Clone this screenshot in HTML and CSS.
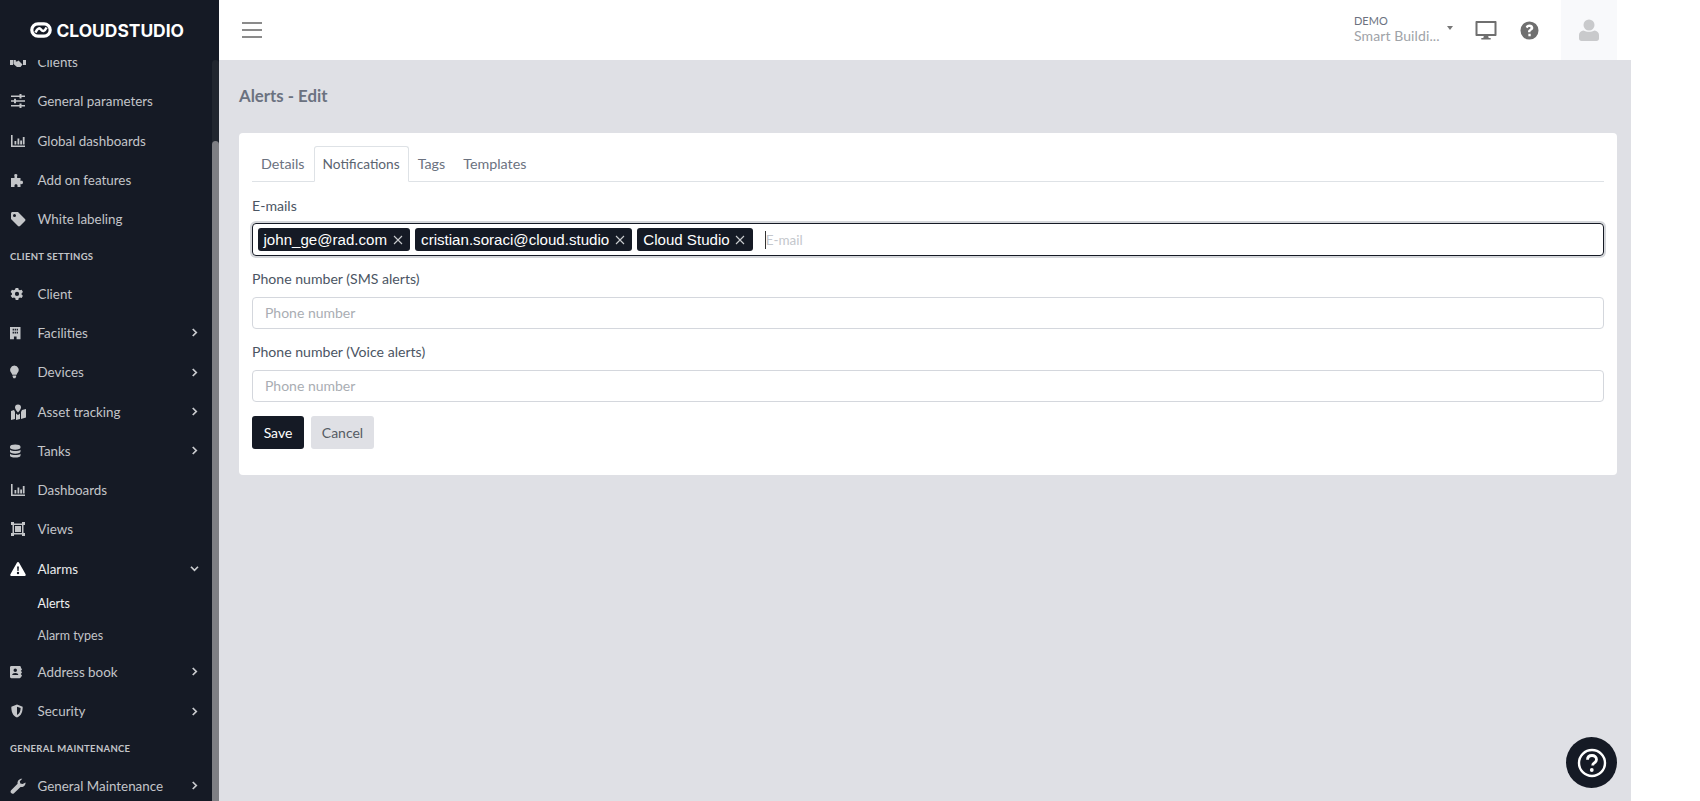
FILE: index.html
```html
<!DOCTYPE html>
<html lang="en">
<head>
<meta charset="utf-8">
<title>Alerts - Edit</title>
<link rel="stylesheet" href="styles.css">
</head>
<body>
<div class="app">
  <aside class="sidebar">
    <div class="brand">
      <svg class="brand-icon" viewBox="0 0 22 16"><rect x="1.800" y="1.800" width="18.400" height="12.400" rx="6.200" fill="none" stroke="#fff" stroke-width="3.200"/><path d="M5.500 10.500C7.500 6 9.500 5.500 11 7.500s3.500 2.500 5.500-2" fill="none" stroke="#fff" stroke-width="2.600"/></svg>
      <span class="brand-text">CLOUDSTUDIO</span>
    </div>
    <div class="side-scroll">
      <nav class="menu">
        <a class="item"><svg class="ic ic-l" viewBox="0 0 16 16"><path d="M0 4h3v7H0zM13 4h3v7h-3zM3.500 4.500H7L5.500 7c1 1 2 .5 3-.5l4 4-2 2.500H7L3.500 10z"/></svg><span>Clients</span></a>
        <a class="item"><svg class="ic ic-l" viewBox="0 0 16 16"><path d="M1 2.500h14v1.500H1zM1 7.200h14v1.500H1zM1 12h14v1.500H1zM9.500 1h2v4.500h-2zM4 5.700h2v4.500H4zM9.500 10.500h2V15h-2z"/></svg><span>General parameters</span></a>
        <a class="item"><svg class="ic ic-l" viewBox="0 0 16 16"><path d="M1 2h1.600v10.500H15V14H1zM4.500 8h1.800v3.500H4.500zM7.500 5.500h1.800v6H7.500zM10.200 7.500H12v4h-1.800zM12.800 4h1.800v7.500h-1.800z"/></svg><span>Global dashboards</span></a>
        <a class="item"><svg class="ic ic-l" viewBox="0 0 16 16"><path d="M1 6h3.500V4.200C4 3.500 4 2 5.800 2s1.800 1.500 1.300 2.200V6H10.500v3.200c.8-.6 2.500-.6 2.500 1.300s-1.700 1.900-2.500 1.300V15H7.500v-1.500c0-1.700-3-1.700-3 0V15H1z"/></svg><span>Add on features</span></a>
        <a class="item"><svg class="ic ic-l" viewBox="0 0 16 16"><path d="M1 2.500C1 1.700 1.700 1 2.500 1H8l7 7c.6.600.6 1.500 0 2l-5 5c-.6.600-1.500.6-2 0L1 8zM4.500 3A1.500 1.500 0 1 0 4.500 6 1.500 1.500 0 0 0 4.500 3z" fill-rule="evenodd"/></svg><span>White labeling</span></a>
        <div class="section">Client settings</div>
        <a class="item"><svg class="ic" viewBox="0 0 16 16"><path d="M6.500 1h3l.4 2 1.500.8 1.900-.7 1.500 2.600-1.500 1.300v1.800l1.500 1.300-1.500 2.600-1.900-.7-1.500.8-.4 2h-3l-.4-2-1.500-.8-1.900.7L.7 10.100l1.500-1.300V7L.7 5.700l1.500-2.600 1.900.7 1.500-.8zM8 5.500a2.400 2.400 0 1 0 0 4.800 2.400 2.400 0 0 0 0-4.800z" fill-rule="evenodd"/></svg><span>Client</span></a>
        <a class="item has-sub"><svg class="ic" viewBox="2 0 16 16"><path d="M2 1h12v14H9.500v-3h-3v3H2zM5 3v2h1.500V3zM7.300 3v2h1.500V3zM9.600 3v2h1.500V3zM5 6.500v2h1.500v-2zM7.300 6.500v2h1.500v-2zM9.600 6.500v2h1.500v-2z" fill-rule="evenodd"/></svg><span>Facilities</span><svg class="chev" viewBox="0 0 8 10"><path d="M2 1l4 4-4 4"/></svg></a>
        <a class="item has-sub"><svg class="ic" viewBox="1.500 0 16 16"><path d="M6.500 0.500a5 5 0 0 1 3.500 8.500c-.6.700-.8 1.400-.9 2H4c-.1-.6-.3-1.300-.9-2A5 5 0 0 1 6.500.5zM4.500 12h4v1.500L7.500 15h-2l-1-1.500z"/></svg><span>Devices</span><svg class="chev" viewBox="0 0 8 10"><path d="M2 1l4 4-4 4"/></svg></a>
        <a class="item has-sub"><svg class="ic ic-l" viewBox="0 0 16 16"><path d="M8 .5a3 3 0 0 1 3 3C11 5 9 7.500 8 8.500 7 7.500 5 5 5 3.500a3 3 0 0 1 3-3zM1 7l3-1 1 2v7l-4 1zM6 9.500 8 11l2-1.500V15l-4 1zM11 8l1-2 4-1v8.500L11 15z"/></svg><span>Asset tracking</span><svg class="chev" viewBox="0 0 8 10"><path d="M2 1l4 4-4 4"/></svg></a>
        <a class="item has-sub"><svg class="ic" viewBox="2 0 16 16"><path d="M2 3c0-1.500 2.500-2.500 6-2.500S14 1.500 14 3v1c0 1.500-2.500 2.500-6 2.500S2 5.500 2 4zM2 6.500C3.500 7.700 5.500 8 8 8s4.500-.3 6-1.500V8.500C14 10 11.500 11 8 11S2 10 2 8.500zM2 11c1.500 1.200 3.500 1.500 6 1.500s4.500-.3 6-1.500v2c0 1.500-2.500 2.500-6 2.500S2 14.500 2 13z"/></svg><span>Tanks</span><svg class="chev" viewBox="0 0 8 10"><path d="M2 1l4 4-4 4"/></svg></a>
        <a class="item"><svg class="ic ic-l" viewBox="0 0 16 16"><path d="M1 2h1.600v10.500H15V14H1zM4.500 8h1.800v3.500H4.500zM7.500 5.500h1.800v6H7.500zM10.200 7.500H12v4h-1.800zM12.800 4h1.800v7.500h-1.800z"/></svg><span>Dashboards</span></a>
        <a class="item"><svg class="ic ic-l" viewBox="0 0 16 16"><path d="M1 1h3v1.500h8V1h3v3h-1.500v8H15v3h-3v-1.500H4V15H1v-3h1.500V4H1zM4 4v8h8V4z" fill-rule="evenodd"/><path d="M5 5h6v6H5z"/></svg><span>Views</span></a>
        <a class="item open"><svg class="ic ic-l ic-white" viewBox="0 0 16 16"><path d="M8 1c.5 0 .9.300 1.100.7l6.500 11.500c.4.800-.1 1.800-1.100 1.800h-13c-1 0-1.500-1-1.100-1.800L6.900 1.700C7.100 1.300 7.500 1 8 1zM7.100 5.500l.3 4.500h1.200l.3-4.500zM8 10.800a1.200 1.200 0 1 0 0 2.400 1.200 1.200 0 0 0 0-2.400z" fill-rule="evenodd"/></svg><span>Alarms</span><svg class="chev" viewBox="0 0 10 8"><path d="M1 2l4 4 4-4"/></svg></a>
        <a class="subitem active">Alerts</a>
        <a class="subitem">Alarm types</a>
        <a class="item has-sub"><svg class="ic" viewBox="1.500 0 16 16"><path d="M3 1h9.500c.8 0 1.500.7 1.500 1.500V4h1v2h-1v1.500h1v2h-1V11h1v2h-1v.5c0 .8-.7 1.500-1.500 1.500H3c-.8 0-1.500-.7-1.500-1.500v-11C1.500 1.700 2.200 1 3 1zM7.500 4a2 2 0 1 0 0 4 2 2 0 0 0 0-4zM4 11.500h7c0-1.500-1.500-2.500-3.500-2.500S4 10 4 11.500z" fill-rule="evenodd"/></svg><span>Address book</span><svg class="chev" viewBox="0 0 8 10"><path d="M2 1l4 4-4 4"/></svg></a>
        <a class="item has-sub"><svg class="ic" viewBox="0 0 16 16"><path d="M8 .5l6.500 2.500c0 6-1.500 10-6.500 12.500C3 13 1.500 9 1.500 3zM8 3v9.700c3-1.800 4-4.500 4.200-8.200z" fill-rule="evenodd"/></svg><span>Security</span><svg class="chev" viewBox="0 0 8 10"><path d="M2 1l4 4-4 4"/></svg></a>
        <div class="section">General maintenance</div>
        <a class="item has-sub"><svg class="ic ic-l" viewBox="0 0 16 16"><path d="M15.500 4.500c.3 2.800-2.200 5-5 4.400L4 15.200c-.8.700-2 .7-2.800-.1s-.9-2-.1-2.800l6.500-6.500C7 3 9.500.4 12.300.8L9.800 3.300l.5 2.200 2.300.5z"/></svg><span>General Maintenance</span><svg class="chev" viewBox="0 0 8 10"><path d="M2 1l4 4-4 4"/></svg></a>
      </nav>
      <div class="scrollbar"><div class="thumb"></div></div>
    </div>
  </aside>
  <div class="main">
    <header class="topbar">
      <button class="burger" aria-label="Menu"><i></i><i></i><i></i></button>
      <div class="top-right">
        <div class="tenant">
          <div class="tenant-name">DEMO</div>
          <div class="tenant-site">Smart Buildi...</div>
        </div>
        <span class="caret"></span>
        <svg class="top-ic monitor" viewBox="0 0 22 20"><path d="M1.500 1h19c.6 0 1 .4 1 1v13c0 .6-.4 1-1 1h-19c-.6 0-1-.4-1-1V2c0-.6.400-1 1-1zM2.500 3v11h17V3zM8.800 16h4.400l.5 2h2v1.600H6.300V18h2z" fill-rule="evenodd"/></svg>
        <svg class="top-ic help" viewBox="0 0 20 20"><path d="M10 .5a9.500 9.500 0 1 1 0 19 9.500 9.500 0 0 1 0-19zM8.800 13.500v2.600h2.500v-2.600zM10 3.800c-2.300 0-3.500 1.200-4 2.500l2 1.200c.4-.9.900-1.300 1.800-1.300.8 0 1.400.4 1.400 1 0 .6-.4.900-1.200 1.400-1 .6-1.500 1.200-1.500 2.300v.9h2.500v-.5c0-.5.300-.7 1.100-1.200 1.100-.7 1.900-1.500 1.900-2.900 0-2.100-1.900-3.400-4-3.400z" fill-rule="evenodd"/></svg>
        <div class="user-cell">
          <svg class="user-ic" viewBox="0 0 20 22"><circle cx="10" cy="6" r="5.500"/><path d="M4.500 11.500c1.500 1 3.500 1.300 5.500 1.300s4-.3 5.500-1.300c2.500.3 4.500 2 4.500 4.500v3.500c0 1.300-1 2.500-2.500 2.500h-15C1 22 0 20.800 0 19.500V16c0-2.500 2-4.200 4.500-4.500z"/></svg>
        </div>
      </div>
    </header>
    <main class="content">
      <h1 class="page-title">Alerts - Edit</h1>
      <section class="card">
        <ul class="tabs">
          <li class="tab">Details</li>
          <li class="tab active">Notifications</li>
          <li class="tab">Tags</li>
          <li class="tab">Templates</li>
        </ul>
        <form class="form">
          <label class="label label-first">E-mails</label>
          <div class="tag-input">
            <span class="tag">john_ge@rad.com<svg class="x" viewBox="0 0 10 10"><path d="M1 1l8 8M9 1l-8 8"/></svg></span>
            <span class="tag">cristian.soraci@cloud.studio<svg class="x" viewBox="0 0 10 10"><path d="M1 1l8 8M9 1l-8 8"/></svg></span>
            <span class="tag">Cloud Studio<svg class="x" viewBox="0 0 10 10"><path d="M1 1l8 8M9 1l-8 8"/></svg></span>
            <span class="tag-ph">E-mail</span>
          </div>
          <label class="label">Phone number (SMS alerts)</label>
          <input class="field" placeholder="Phone number">
          <label class="label">Phone number (Voice alerts)</label>
          <input class="field" placeholder="Phone number">
          <div class="actions">
            <button type="button" class="btn btn-save">Save</button>
            <button type="button" class="btn btn-cancel">Cancel</button>
          </div>
        </form>
      </section>
      <button class="fab" aria-label="Help">
        <svg viewBox="0 0 30 30"><circle cx="15" cy="15" r="13" fill="none" stroke="#fff" stroke-width="2.400"/><path d="M10.500 11.800c0-2.800 2-4.300 4.500-4.300s4.500 1.500 4.500 4c0 2-1.300 2.900-2.500 3.700-1 .7-1.300 1.200-1.300 2.300" fill="none" stroke="#fff" stroke-width="2.800"/><circle cx="14.800" cy="22" r="1.900" fill="#fff"/></svg>
      </button>
    </main>
  </div>
</div>
</body>
</html>
```
FILE: styles.css
```css
* { box-sizing: border-box; }
html, body { margin: 0; height: 100%; background: #fff; overflow: hidden; }
body { font-family: "Lato", "Noto Sans", sans-serif; color: #4b5563; }
.app { display: flex; width: 1631px; height: 801px; }

.sidebar { width: 219px; flex: none; background: #151a25; display: flex; flex-direction: column; height: 100%; }
.brand { height: 60px; flex: none; display: flex; align-items: center; gap: 4.500px; padding: 0 0 0 30px; position: relative; z-index: 1; background: #151a25; }
.brand-icon { width: 22px; height: 16px; }
.brand-text { font-family: "Inter", "Liberation Sans", sans-serif; font-weight: 700; font-size: 17.400px; color: #fff; }
.side-scroll { flex: 1; position: relative; overflow: hidden; }
.menu { margin-top: -17.500px; }
.item { display: flex; align-items: center; height: 39.300px; padding-left: 10px; font-size: 13.400px; color: #c3c5c9; position: relative; }
.item span { margin-left: 13.500px; }
.ic { width: 14px; height: 14px; fill: #c4c6c9; flex: none; }
.ic-l { width: 16px; height: 16px; }
.ic-l + span { margin-left: 11.500px; }
.ic-white { fill: #fff; }
.chev { position: absolute; left: 191px; top: 15px; width: 7px; height: 9px; fill: none; stroke: #c9cbce; stroke-width: 2; }
.open { color: #e9eaec; }
.open .chev { width: 9px; height: 7px; top: 16px; left: 189.500px; }
.section { font-size: 9.500px; font-weight: 700; text-transform: uppercase; color: #c3c5c9; letter-spacing: .3px; padding-left: 10px; height: 35px; line-height: 35px; }
.subitem { display: block; height: 32px; line-height: 32px; padding-left: 37.500px; font-size: 12.500px; color: #c3c5c9; }
.subitem.active { color: #f0f1f2; }
.scrollbar { position: absolute; right: 0; top: 0; bottom: 0; width: 7px; background: #21262f; border-radius: 4px 4px 0 0; }
.thumb { position: absolute; top: 81px; bottom: 0; left: 0; right: 0; background: #7e7f84; border-radius: 4px 4px 0 0; }

.main { flex: 1; display: flex; flex-direction: column; min-width: 0; }
.topbar { height: 60px; flex: none; background: #fff; display: flex; align-items: center; justify-content: space-between; padding-left: 23px; padding-right: 14px; }
.burger { border: 0; background: none; padding: 0; width: 20px; display: flex; flex-direction: column; gap: 5px; }
.burger i { display: block; height: 2px; background: #8b8b8b; }
.top-right { display: flex; align-items: center; height: 60px; }
.tenant { width: 93px; line-height: 1; padding-bottom: 3px; }
.tenant-name { font-size: 11px; color: #6b7280; margin-bottom: 3px; }
.tenant-site { font-size: 14px; color: #a0a3a8; letter-spacing: .1px; }
.caret { width: 0; height: 0; border: 3.500px solid transparent; border-top: 4px solid #777; border-bottom: 0; margin-right: 22px; margin-top: -4px; }
.top-ic { fill: #6f6f6f; flex: none; }
.monitor { width: 22px; height: 20px; margin-right: 23px; }
.help { width: 19px; height: 19px; margin-right: 22px; }
.user-cell { width: 56px; height: 60px; background: #f8f9fb; display: flex; align-items: center; justify-content: center; }
.user-ic { width: 20px; height: 22px; fill: #c9cacc; }

.content { flex: 1; background: #dfe0e5; padding: 0 14px 0 20px; position: relative; }
.page-title { margin: 0; padding-top: 26px; height: 73px; font-size: 16.800px; line-height: 20px; font-weight: 700; color: #6b7280; }
.card { background: #fff; border-radius: 4px; height: 342px; padding: 13px 13px 0; }
.tabs { list-style: none; margin: 0; padding: 0; display: flex; height: 36px; border-bottom: 1px solid #dee2e6; }
.tab { padding: 0 8px; height: 36px; line-height: 33px; font-size: 14.300px; color: #6b7280; border: 1px solid transparent; }
.tab.active { background: #fff; color: #5b6470; font-size: 13.700px; border-color: #dee2e6 #dee2e6 #fff; border-radius: 3px 3px 0 0; }
.form { display: flex; flex-direction: column; }
.label { font-size: 14.100px; line-height: 20px; color: #4b5563; margin-bottom: 8px; margin-top: 13px; }
.label-first { margin-top: 14px; margin-bottom: 7px; }
.tag-input { height: 33px; border: 1.500px solid #151a25; border-radius: 4px; box-shadow: 0 0 0 2px #d5d7db; display: flex; align-items: center; padding-left: 4.500px; gap: 5px; }
.tag { display: inline-flex; align-items: center; height: 23px; padding: 0 7.500px 0 6px; background: #151a25; color: #fff; border-radius: 3px; font-family: "Liberation Sans", Arial, sans-serif; font-size: 15.100px; white-space: nowrap; }
.x { width: 10px; height: 10px; margin-left: 5.500px; stroke: #c9cbce; stroke-width: 1.100; fill: none; }
.tag-ph { margin-left: 7px; border-left: 1px solid #333; font-size: 13.500px; color: #c4c7cc; line-height: 18px; }
.field { height: 32px; border: 1px solid #d4d7dd; border-radius: 4px; padding: 0 12px 2px; font: 14px "Lato", "Noto Sans", sans-serif; background: #fff; outline: none; }
.field::placeholder { color: #a9adb3; opacity: 1; }
.actions { display: flex; gap: 7px; margin-top: 14px; }
.btn { height: 33px; border: 0; border-radius: 3px; font: 14px "Lato", "Noto Sans", sans-serif; padding: 0; }
.btn-save { width: 52px; background: #151a25; color: #fff; }
.btn-cancel { width: 63px; background: #dfe0e5; color: #555b64; }
.fab { position: absolute; right: 14px; bottom: 13px; width: 51px; height: 51px; border-radius: 50%; background: #151a25; border: 0; padding: 10.500px; display: flex; }
.fab svg { width: 30px; height: 30px; }
```
